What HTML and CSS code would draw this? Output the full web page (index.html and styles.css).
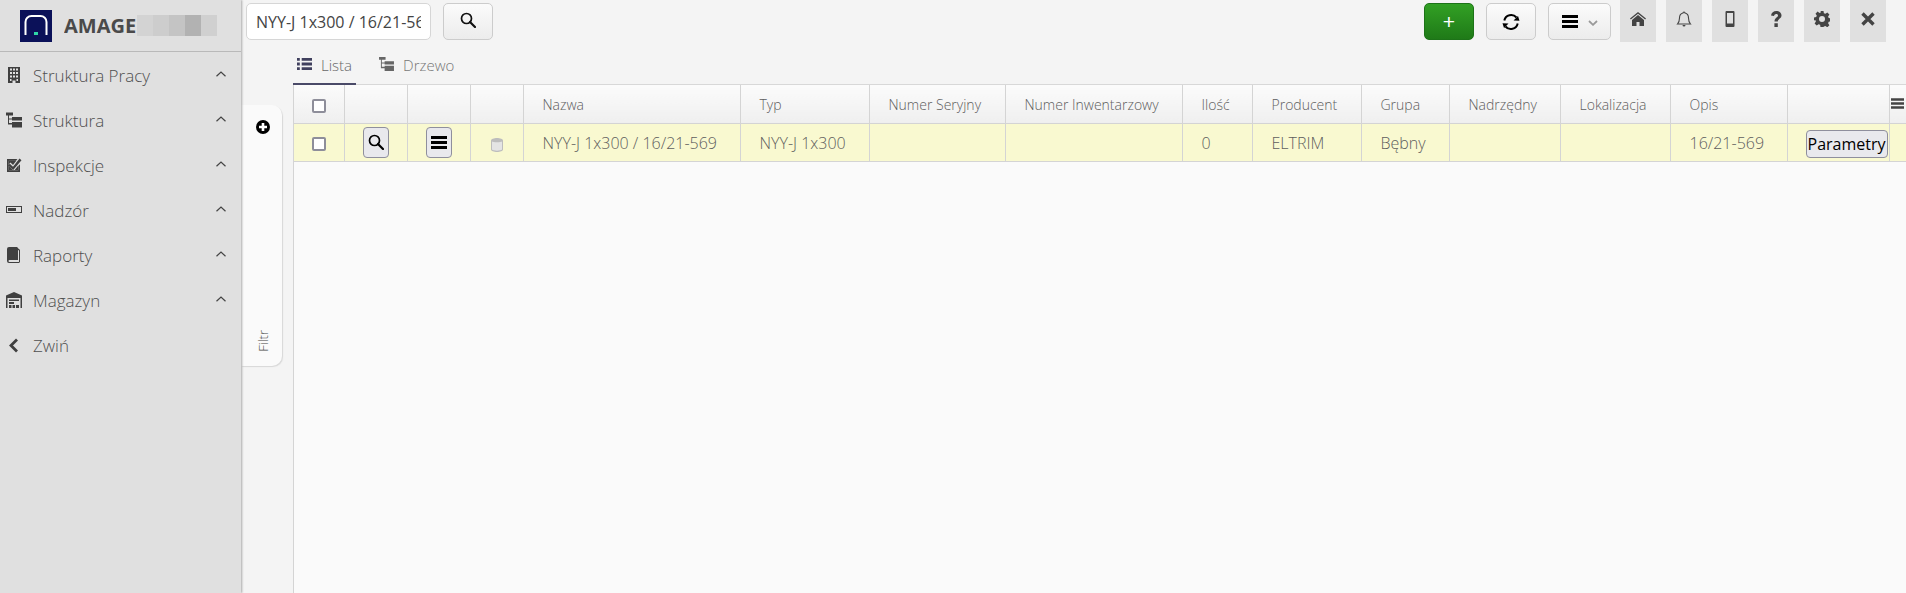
FILE: index.html
```html
<!DOCTYPE html>
<html lang="pl">
<head>
<meta charset="utf-8">
<title>AMAGE</title>
<link rel="stylesheet" href="styles.css">
</head>
<body>
<svg class="defs" width="0" height="0" aria-hidden="true">
  <symbol id="i-tree" viewBox="0 0 16 15"><path d="M0 0h7v3H3v3h3V4.500h10v3.500H6V7H3v3.500h3V9.500h10V15H6v-3H2V3H0z" fill="currentColor"/></symbol>
  <symbol id="i-search" viewBox="0 0 16 16"><circle cx="6.500" cy="6.500" r="5" fill="none" stroke="currentColor" stroke-width="1.700"/><path d="M10 10l5 5" stroke="currentColor" stroke-width="2.200" stroke-linecap="round"/></symbol>
  <symbol id="i-bars" viewBox="0 0 16 13"><path d="M0 0h16v3H0zM0 5h16v3H0zM0 10h16v3H0z" fill="currentColor"/></symbol>
  <symbol id="i-chev" viewBox="0 0 10 6"><path d="M.5 5.300L5 1l4.500 4.300" fill="none" stroke="currentColor" stroke-width="1.200"/></symbol>
</svg>
<div class="app">
  <aside class="sidebar">
    <div class="brand">
      <svg class="logo" viewBox="0 0 32 32"><rect width="32" height="32" fill="#0b1159"/><path d="M5.500 25V12a6 6 0 0 1 6-6h9a6 6 0 0 1 6 6v13" fill="none" stroke="#fff" stroke-width="2"/><rect x="14" y="22" width="4" height="3" fill="#2fd6a6"/></svg>
      <span class="brand-name">AMAGE</span>
      <span class="blur" aria-hidden="true"><i></i><i></i><i></i><i></i><i></i></span>
    </div>
    <nav class="menu">
      <a class="item"><svg class="ic ic-b" viewBox="0 0 12 16"><path fill-rule="evenodd" d="M0 0h12v16H7.500v-2.500h-3V16H0zM2 1.500v2h2v-2zm3 0v2h2v-2zm3 0v2h2v-2zM2 5v2h2V5zm3 0v2h2V5zm3 0v2h2V5zM2 8.500v2h2v-2zm3 0v2h2v-2zm3 0v2h2v-2zM2 12v2h1.500v-2zm6.500 0v2H10v-2z" fill="currentColor"/></svg><span>Struktura Pracy</span><svg class="chev"><use href="#i-chev"/></svg></a>
      <a class="item"><svg class="ic"><use href="#i-tree"/></svg><span>Struktura</span><svg class="chev"><use href="#i-chev"/></svg></a>
      <a class="item"><svg class="ic" viewBox="0 0 16 15"><path fill-rule="evenodd" d="M1 1.500h10.500L9.800 3.200H2.700v9.600h9.600V8.500L14 6.800V14.500H1z" fill="currentColor"/><path d="M3.800 6.200L7 9.300 13.500 1l2 1.700L7.200 12.600 2 7.900z" fill="currentColor"/><path d="M2.500 3h8L7 7.500 4.500 5 2.700 7zM2.700 8.500l4.500 4.300H2.700zM8.500 12.800L12.300 8v4.800z" fill="currentColor"/></svg><span>Inspekcje</span><svg class="chev"><use href="#i-chev"/></svg></a>
      <a class="item"><svg class="ic ic-n" viewBox="0 0 16 7"><path fill-rule="evenodd" d="M0 0h16v7H0zm1 1v5h14V1zm1 1h8v3H2z" fill="currentColor"/></svg><span>Nadzór</span><svg class="chev"><use href="#i-chev"/></svg></a>
      <a class="item"><svg class="ic ic-r" viewBox="0 0 13 16"><path fill-rule="evenodd" d="M2 0h8l1.500 1.500V2H12l1 1v12l-1 1H2Q0 16 0 14V2Q0 0 2 0zM11 3v10H2.500q-1 0-1 1t1 1h9q.5 0 .5-.5V3.500z" fill="currentColor"/></svg><span>Raporty</span><svg class="chev"><use href="#i-chev"/></svg></a>
      <a class="item"><svg class="ic" viewBox="0 0 16 16"><path fill-rule="evenodd" d="M8 0l8 3.500V16h-1.500V6h-13v10H0V3.500zM3 7.500h10V9H3zM3 10h5v2H3zM3 13h2.500v3H3zM6.500 13H9v3H6.500zM10 13h3v3h-3z" fill="currentColor"/></svg><span>Magazyn</span><svg class="chev"><use href="#i-chev"/></svg></a>
      <a class="item"><svg class="ic ic-back" viewBox="0 0 11 15"><path d="M9 1.500L3 7.500l6 6" fill="none" stroke="currentColor" stroke-width="2.800"/></svg><span>Zwiń</span></a>
    </nav>
  </aside>

  <main class="main">
    <header class="topbar">
      <input class="search" type="text" value="NYY-J 1x300 / 16/21-569" aria-label="Szukaj">
      <button class="btn btn-search"><svg class="i16"><use href="#i-search"/></svg></button>
      <div class="spacer"></div>
      <button class="btn btn-add">+</button>
      <button class="btn btn-sync"><svg class="i18" viewBox="0 0 18 18"><path d="M2.300 7.500A7 7 0 0 1 14.500 4.500M15.700 10.500A7 7 0 0 1 3.500 13.500" fill="none" stroke="currentColor" stroke-width="2"/><path d="M17.500 7.800L11.500 7.500 16 3zM.5 10.200L6.500 10.500 2 15z" fill="currentColor"/></svg></button>
      <button class="btn btn-more"><svg class="i-bars"><use href="#i-bars"/></svg><svg class="caret" viewBox="0 0 10 6"><path d="M1 1l4 3.800L9 1" fill="none" stroke="#999" stroke-width="1.800"/></svg></button>
      <div class="squares">
        <a class="sq"><svg viewBox="0 0 16 14"><path d="M8 0l8 6.500-.8 1L8 1.800.8 7.500 0 6.500z" fill="currentColor"/><path d="M8 3l6 5v6H9.500v-4h-3v4H2V8z" fill="currentColor"/></svg></a>
        <a class="sq"><svg viewBox="0 0 16 16"><path d="M8 1a1 1 0 0 1 1 1c2.500.5 3.500 2.500 3.500 5 0 3 .7 4.500 2 6H1.500c1.300-1.500 2-3 2-6 0-2.500 1-4.500 3.500-5a1 1 0 0 1 1-1z" fill="none" stroke="currentColor" stroke-width="1.100"/><path d="M6.500 14h3a1.500 1.500 0 0 1-3 0z" fill="currentColor"/></svg></a>
        <a class="sq"><svg viewBox="0 0 16 16"><path fill-rule="evenodd" d="M4.500 0h7q1 0 1 1v14q0 1-1 1h-7q-1 0-1-1V1q0-1 1-1zM5 2v10.500h6V2z" fill="currentColor"/></svg></a>
        <a class="sq"><svg viewBox="0 0 16 16"><path d="M3 4.500C3.500 1.500 5.500 0 8.300 0 11.300 0 13.500 1.800 13.500 4.300c0 3.700-3.700 3.400-3.700 6.200H6.500c0-4 3.500-3.700 3.500-6 0-1-.7-1.500-1.800-1.500S6.300 3.700 6 5zM6.400 12.200h3.400V16H6.400z" fill="currentColor"/></svg></a>
        <a class="sq"><svg viewBox="0 0 16 16"><path fill-rule="evenodd" d="M6.500 0h3l.4 2.200 1.500.6 1.900-1.300 2.100 2.100-1.300 1.900.6 1.500 2.200.4v3l-2.200.4-.6 1.500 1.300 1.900-2.100 2.100-1.900-1.300-1.500.6L9.500 16h-3l-.4-2.200-1.500-.6-1.900 1.300-2.100-2.100 1.300-1.900-.6-1.500L0 9.500v-3l2.200-.4.6-1.500L1.500 2.700l2.100-2.100 1.900 1.300 1.500-.6zM8 5a3 3 0 1 0 0 6 3 3 0 0 0 0-6z" fill="currentColor"/></svg></a>
        <a class="sq"><svg viewBox="0 0 16 16"><path d="M2.500 2.500l11 11M13.500 2.500l-11 11" stroke="currentColor" stroke-width="3.400" fill="none"/></svg></a>
      </div>
    </header>

    <div class="body">
      <div class="rail">
        <svg class="plus" viewBox="0 0 14 14"><circle cx="7" cy="7" r="7" fill="#000"/><path d="M7 3v8M3 7h8" stroke="#fff" stroke-width="2.600"/></svg>
        <span class="rail-label">Filtr</span>
      </div>
      <section class="content">
        <div class="tabs">
          <a class="tab active"><svg class="tab-ic" viewBox="0 0 16 13"><path d="M0 0h3v3H0zM5 0h11v3H5zM0 5h3v3H0zM5 5h11v3H5zM0 10h3v3H0zM5 10h11v3H5z" fill="currentColor"/></svg>Lista</a>
          <a class="tab"><svg class="tab-ic"><use href="#i-tree"/></svg>Drzewo</a>
        </div>
        <div class="grid-wrap">
          <table class="grid">
            <colgroup>
              <col class="w50"><col class="w63"><col class="w63"><col class="w53"><col class="w217"><col class="w129"><col class="w136"><col class="w177"><col class="w70"><col class="w109"><col class="w88"><col class="w111"><col class="w110"><col class="w117"><col class="w102"><col>
            </colgroup>
            <thead>
              <tr>
                <th class="ctr"><span class="chk"></span></th><th></th><th></th><th></th>
                <th>Nazwa</th><th>Typ</th><th>Numer Seryjny</th><th>Numer Inwentarzowy</th><th>Ilość</th><th>Producent</th><th>Grupa</th><th>Nadrzędny</th><th>Lokalizacja</th><th>Opis</th><th></th>
                <th class="ctr last"><svg class="h-bars"><use href="#i-bars"/></svg></th>
              </tr>
            </thead>
            <tbody>
              <tr>
                <td class="ctr"><span class="chk"></span></td>
                <td class="ctr"><button class="mini"><svg class="i15"><use href="#i-search"/></svg></button></td>
                <td class="ctr"><button class="mini"><svg class="i-bars"><use href="#i-bars"/></svg></button></td>
                <td class="ctr"><svg class="db" viewBox="0 0 12 14"><path d="M0 2.500C0 1 3 0 6 0s6 1 6 2.500v9C12 13 9 14 6 14s-6-1-6-2.500z" fill="#bdbdbd"/><path d="M1 3.500C2 4.500 10 4.500 11 3.500v8C10 13 2 13 1 11.500z" fill="#e4e4e4"/></svg></td>
                <td>NYY-J 1x300 / 16/21-569</td><td>NYY-J 1x300</td><td></td><td></td><td>0</td><td>ELTRIM</td><td>Bębny</td><td></td><td></td><td>16/21-569</td>
                <td class="end"><button class="params">Parametry</button></td>
                <td class="last"></td>
              </tr>
            </tbody>
          </table>
        </div>
      </section>
    </div>
  </main>
</div>
</body>
</html>
```
FILE: styles.css
```css
* { box-sizing: border-box; }
html, body { margin: 0; height: 100%; overflow: hidden; }
body { font-family: "Open Sans", "Liberation Sans", sans-serif; background: #f4f4f4; color: #555; }
.defs { position: absolute; }
.app { display: flex; height: 593px; }

.sidebar { width: 241px; flex: none; background: #e0e0e0; box-shadow: 1px 0 2px #aaa; position: relative; z-index: 2; }
.brand { height: 52px; display: flex; align-items: center; padding-left: 20px; border-bottom: 1px solid #b9b9b9; }
.logo { width: 32px; height: 32px; flex: none; }
.brand-name { margin-left: 12px; font-size: 20px; font-weight: 700; color: #4a4a4a; width: 72px; overflow: hidden; line-height: 32px; }
.blur { display: flex; height: 21px; margin-left: 1px; }
.blur i { display: block; width: 16px; }
.blur i:nth-child(1) { background: #d3d3d3; }
.blur i:nth-child(2) { background: #cdcdcd; }
.blur i:nth-child(3) { background: #c4c4c4; }
.blur i:nth-child(4) { background: #b2b2b2; }
.blur i:nth-child(5) { background: #d0d0d0; }
.menu { display: flex; flex-direction: column; padding-top: 1px; }
.item { height: 45px; display: flex; align-items: center; position: relative; font-size: 17px; font-weight: 300; color: #4f4f4f; padding-left: 33px; }
.ic { position: absolute; left: 6px; top: 50%; width: 16px; height: 16px; margin-top: -9px; color: #404040; }
.ic-b { left: 8px; width: 12px; }
.ic-n { height: 7px; margin-top: -5px; }
.ic-r { left: 7px; width: 13px; }
.ic-back { left: 8px; width: 11px; height: 15px; margin-top: -8px; }
.chev { position: absolute; right: 15px; top: 18px; width: 10px; height: 6px; color: #444; }

.main { flex: 1; min-width: 0; display: flex; flex-direction: column; }
.topbar { height: 42px; display: flex; align-items: flex-start; padding: 0 20px 0 5px; flex: none; }
.spacer { flex: 1; }
.search { width: 185px; height: 37px; margin-top: 3px; border: 1px solid #d6d6d6; border-radius: 5px; background: #fff; padding: 0 9px; font: 400 16px "Open Sans", sans-serif; color: #444; outline: none; }
.btn { height: 37px; margin-top: 3px; border: 1px solid #ccc; border-radius: 5px; background: linear-gradient(#fbfbfb, #ececec); padding: 0; display: flex; align-items: center; justify-content: center; color: #000; }
.btn-search { width: 50px; margin-left: 12px; }
.btn-search svg { margin-top: -3px; }
.i16 { width: 16px; height: 16px; color: #111; }
.i15 { width: 16px; height: 16px; color: #000; }
.i18 { width: 18px; height: 18px; }
.i-bars { width: 16px; height: 13px; color: #000; }
.btn-add { width: 50px; background: linear-gradient(#32a024, #1f7a18); border-color: #1d7318; color: #fff; font-size: 21px; font-weight: 400; line-height: 1; margin-right: 12px; }
.btn-sync { width: 50px; margin-right: 12px; }
.btn-more { width: 63px; margin-right: 9px; gap: 10px; }
.caret { width: 10px; height: 6px; margin-top: 3px; }
.squares { display: flex; gap: 10px; }
.sq { width: 36px; height: 42px; background: #e0e0e0; display: flex; align-items: center; justify-content: center; color: #444; padding-bottom: 4px; }
.sq svg { width: 16px; height: 16px; }

.body { flex: 1; display: flex; min-height: 0; }
.rail { width: 41px; height: 261px; margin-top: 63px; margin-right: 11px; flex: none; background: #fafafa; border-radius: 0 10px 10px 0; box-shadow: 1px 1px 1px #d8d8d8; display: flex; flex-direction: column; align-items: center; padding: 15px 0 14px; }
.plus { width: 14px; height: 14px; margin-left: 2px; }
.rail-label { writing-mode: vertical-rl; transform: rotate(180deg); font-size: 13px; font-weight: 300; color: #444; margin-top: auto; margin-left: 2px; }
.content { flex: 1; min-width: 0; display: flex; flex-direction: column; }
.tabs { height: 42px; display: flex; flex: none; }
.tab { display: flex; align-items: center; height: 43px; padding: 5px 4px 0; margin-right: 19px; font-size: 15px; font-weight: 300; color: #777; position: relative; z-index: 1; border-bottom: 2px solid transparent; }
.tab.active { color: #666; border-bottom-color: #4a4a68; }
.tab-ic { width: 15px; height: 14px; margin-right: 9px; margin-top: -3px; color: #666; }
.tab.active .tab-ic { color: #40405e; }

.grid-wrap { flex: 1; background: #fafafa; border-left: 1px solid #d4d4d4; border-top: 1px solid #d8d8d8; }
.grid { border-collapse: collapse; table-layout: fixed; width: 1612px; font-size: 16px; font-weight: 300; color: #5e5e5e; }
.w50 { width: 50px; } .w63 { width: 63px; } .w53 { width: 53px; } .w217 { width: 217px; } .w129 { width: 129px; } .w136 { width: 136px; } .w177 { width: 177px; } .w70 { width: 70px; } .w109 { width: 109px; } .w88 { width: 88px; } .w111 { width: 111px; } .w110 { width: 110px; } .w117 { width: 117px; } .w102 { width: 102px; }
th { height: 38px; font-size: 14px; font-weight: 300; text-align: left; padding: 2px 0 0 19px; color: #5e5e5e; background: linear-gradient(#fbfbfb, #efefef); border-right: 1px solid #d4d4d4; border-bottom: 1px solid #d4d4d4; white-space: nowrap; overflow: hidden; }
td { height: 38px; padding: 1px 0 0 19px; background: #f9f9d0; border-right: 1px solid #d4d4d4; border-bottom: 1px solid #d4d4d4; white-space: nowrap; overflow: hidden; }
.grid .ctr { padding: 0; text-align: center; }
.grid .end { padding: 0 0 0 18px; overflow: visible; }
.grid .last { border-right: 0; padding: 0; overflow: hidden; }
.chk { display: inline-block; width: 14px; height: 14px; background: #fff; border: 2px solid #8e8e9a; border-radius: 2px; vertical-align: middle; }
.mini { width: 26px; height: 31px; padding: 0; border: 1px solid #8f8f9d; border-radius: 4px; background: #e9e9ed; display: inline-flex; align-items: center; justify-content: center; vertical-align: middle; }
.db { width: 12px; height: 14px; vertical-align: middle; margin-top: 3px; }
.params { width: 82px; height: 28px; padding: 0; border: 1px solid #8f8f9d; border-radius: 4px; background: #e9e9ed; font: 400 16px "Open Sans", sans-serif; color: #000; white-space: nowrap; margin-top: 3px; display: block; }
.h-bars { width: 13px; height: 11px; color: #444; display: block; margin-left: 1px; }
```
